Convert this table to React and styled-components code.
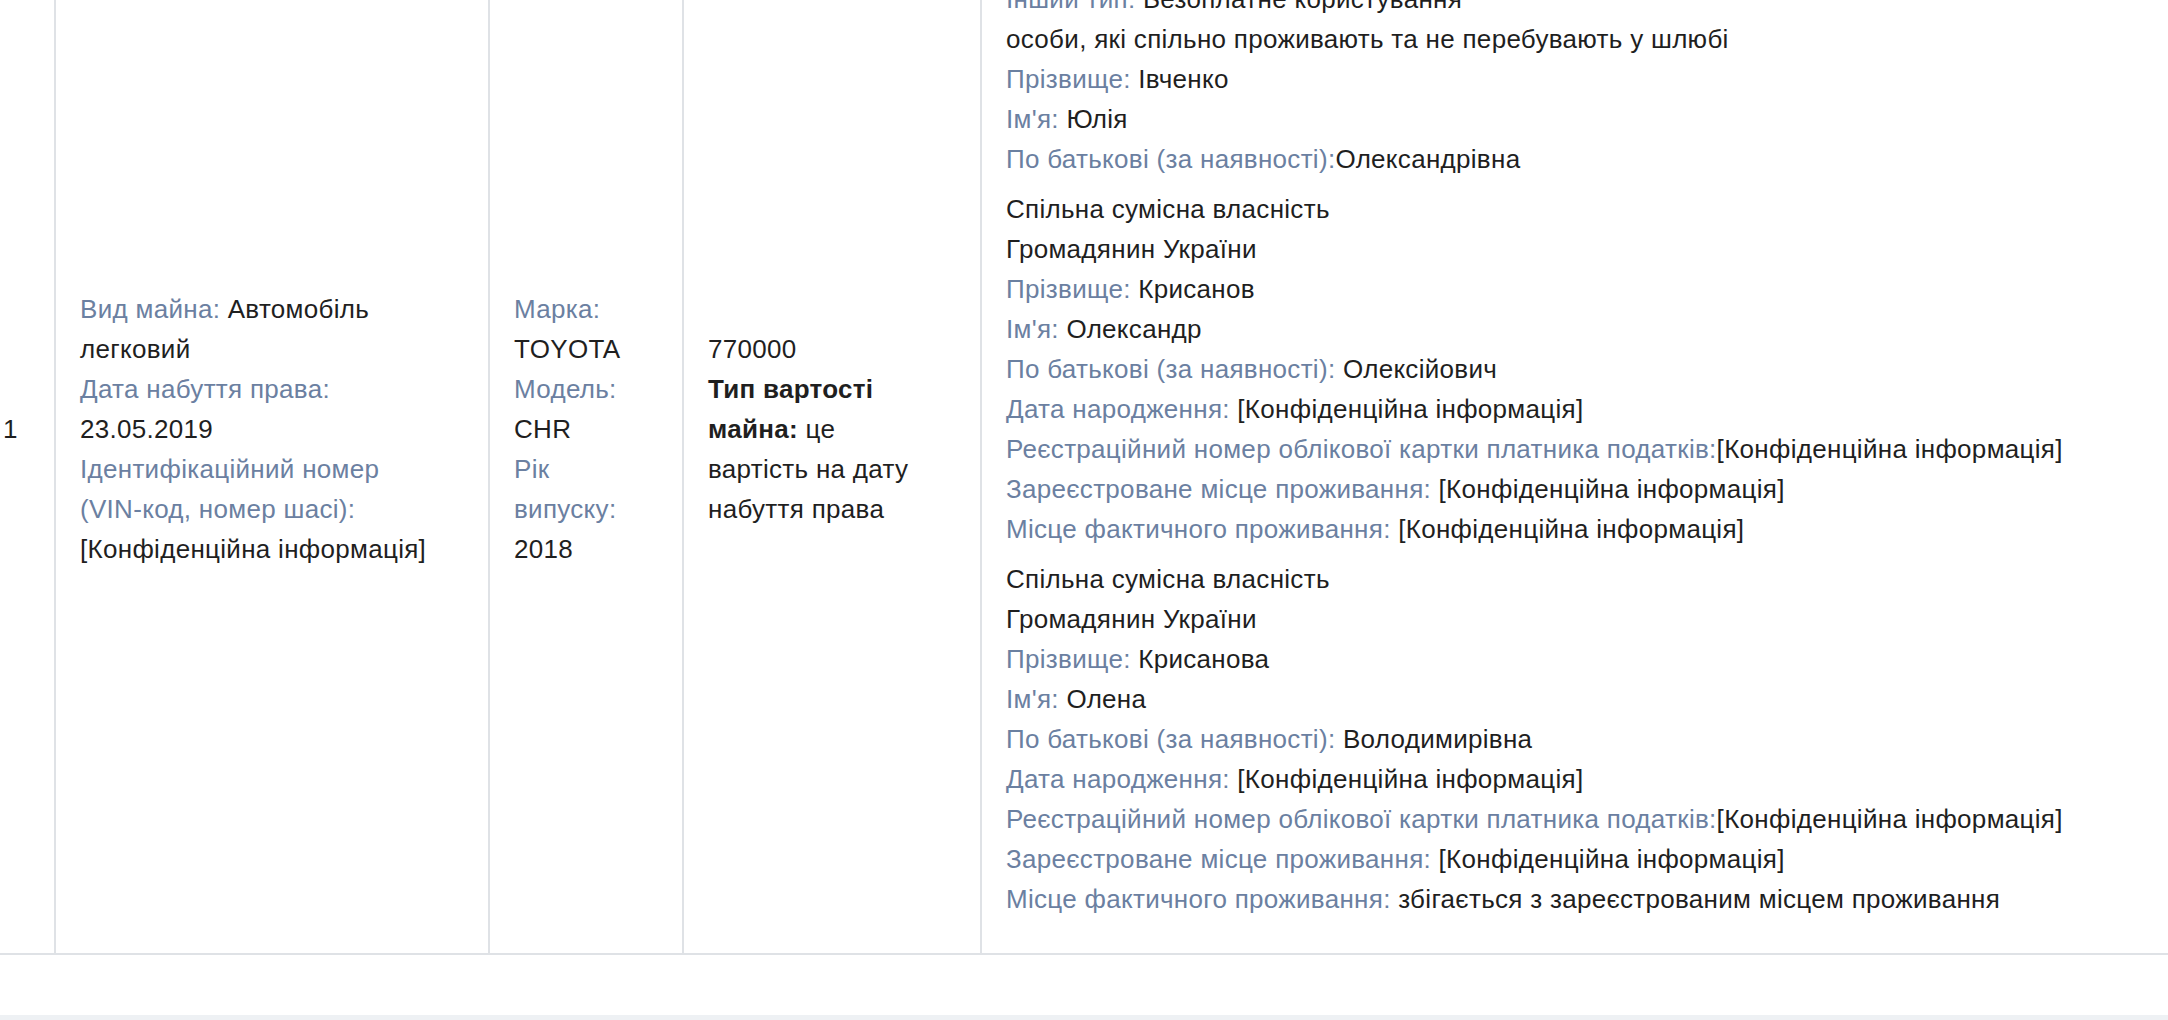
import React from "react";
import styled, { createGlobalStyle } from "styled-components";

const GlobalStyle = createGlobalStyle`
  html, body {
    margin: 0;
    padding: 0;
    background: #fff;
    overflow: hidden;
  }
  body {
    font-family: "Liberation Sans", Arial, Helvetica, sans-serif;
    font-size: 26px;
    line-height: 40px;
    letter-spacing: 0.3px;
    color: #1f1f1f;
  }
`;

const owners = [
  [
    { label: "Власник:", value: "Декларант" },
  ],
  [
    { label: "Інший тип:", value: "Безоплатне користування" },
    { value: "особи, які спільно проживають та не перебувають у шлюбі" },
    { label: "Прізвище:", value: "Івченко" },
    { label: "Ім'я:", value: "Юлія" },
    { label: "По батькові (за наявності):", value: "Олександрівна", tight: true },
  ],
  [
    { value: "Спільна сумісна власність" },
    { value: "Громадянин України" },
    { label: "Прізвище:", value: "Крисанов" },
    { label: "Ім'я:", value: "Олександр" },
    { label: "По батькові (за наявності):", value: "Олексійович" },
    { label: "Дата народження:", value: "[Конфіденційна інформація]" },
    { label: "Реєстраційний номер облікової картки платника податків:", value: "[Конфіденційна інформація]", tight: true },
    { label: "Зареєстроване місце проживання:", value: "[Конфіденційна інформація]" },
    { label: "Місце фактичного проживання:", value: "[Конфіденційна інформація]" },
  ],
  [
    { value: "Спільна сумісна власність" },
    { value: "Громадянин України" },
    { label: "Прізвище:", value: "Крисанова" },
    { label: "Ім'я:", value: "Олена" },
    { label: "По батькові (за наявності):", value: "Володимирівна" },
    { label: "Дата народження:", value: "[Конфіденційна інформація]" },
    { label: "Реєстраційний номер облікової картки платника податків:", value: "[Конфіденційна інформація]", tight: true },
    { label: "Зареєстроване місце проживання:", value: "[Конфіденційна інформація]" },
    { label: "Місце фактичного проживання:", value: "збігається з зареєстрованим місцем проживання" },
  ],
];

const App = () => {
  return (
    <Page>
      <GlobalStyle />
      <Scroller>
        <Table>
          <colgroup>
            <col style={{ width: 55 }} />
            <col style={{ width: 434 }} />
            <col style={{ width: 194 }} />
            <col style={{ width: 298 }} />
            <col />
          </colgroup>
          <tbody>
            <tr>
              <Cell $first>1</Cell>
              <Cell $narrow>
                <Label>Вид майна:</Label> <span>Автомобіль легковий</span>
                <br />
                <Label>Дата набуття права:</Label> <span>23.05.2019</span>
                <br />
                <Label>
                  Ідентифікаційний номер <NoWrap>(VIN-код,</NoWrap> номер шасі):
                </Label>{" "}
                <span>[Конфіденційна інформація]</span>
              </Cell>
              <Cell $narrow>
                <Label>Марка:</Label> <span>TOYOTA</span>
                <br />
                <Label>Модель:</Label> <span>CHR</span>
                <br />
                <Label>Рік випуску:</Label> <span>2018</span>
              </Cell>
              <Cell $narrow>
                770000
                <br />
                <b>Тип вартості майна:</b> це вартість на дату набуття права
              </Cell>
              <Cell>
                {owners.map((group, i) => (
                  <Owner key={i}>
                    {group.map((line, j) => (
                      <div key={j}>
                        {line.label && <Label>{line.label}</Label>}
                        {line.label && !line.tight ? " " : ""}
                        {line.value}
                      </div>
                    ))}
                  </Owner>
                ))}
              </Cell>
            </tr>
          </tbody>
        </Table>
      </Scroller>
      <Footer />
    </Page>
  );
};

const Page = styled.div`
  width: 2168px;
  height: 1020px;
  overflow: hidden;
`;

/* the page is scrolled down a bit, the row starts above the viewport */
const Scroller = styled.div`
  margin-top: -95px;
  padding-bottom: 60px;
`;

const Table = styled.table`
  width: 100%;
  table-layout: fixed;
  border-collapse: collapse;
  border-bottom: 2px solid #dfe2e6;
`;

const Cell = styled.td`
  vertical-align: middle;
  padding: 24px ${(props) => (props.$narrow ? "52px" : "24px")} 24px
    ${(props) => (props.$first ? "3px" : "24px")};
  border-left: ${(props) => (props.$first ? "none" : "2px solid #dfe2e6")};
`;

const Label = styled.span`
  color: #6b80a1;
`;

const NoWrap = styled.span`
  white-space: nowrap;
`;

const Owner = styled.div`
  margin-bottom: 10px;
`;

const Footer = styled.div`
  height: 40px;
  background: #eef1f4;
`;

export default App;
